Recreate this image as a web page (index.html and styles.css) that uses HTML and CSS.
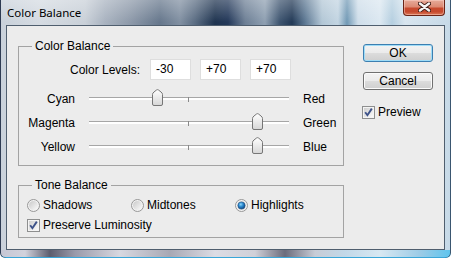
FILE: index.html
```html
<!DOCTYPE html>
<html>
<head>
<meta charset="utf-8">
<title>Color Balance</title>
<link rel="stylesheet" href="styles.css">
</head>
<body>
<div class="window">
  <div class="titlebar">
    <span class="title">Color Balance</span>
    <div class="close">
      <svg width="13" height="10" viewBox="0 0 13 10">
        <path d="M2 1.5 L11 8.5 M11 1.5 L2 8.5" stroke="#3e1a14" stroke-width="4.2" stroke-linecap="round" fill="none"/>
        <path d="M2 1.5 L11 8.5 M11 1.5 L2 8.5" stroke="#f4f4f4" stroke-width="2.4" stroke-linecap="round" fill="none"/>
      </svg>
    </div>
  </div>
  <div class="client">
    <div class="main">
      <fieldset class="group cb">
        <legend>Color Balance</legend>
        <div class="levels">
          <span class="levels-label">Color Levels:</span>
          <div class="field">-30</div>
          <div class="field">+70</div>
          <div class="field">+70</div>
        </div>
        <div class="sliders">
          <span class="lbl-l">Cyan</span>
          <div class="track"><span class="tick"></span>
            <svg class="thumb" style="left:calc(35% - 7px)" width="11" height="17" viewBox="0 0 11 17"><defs><linearGradient id="tg1" x1="0" y1="0" x2="0" y2="1"><stop offset="0" stop-color="#ffffff"/><stop offset="1" stop-color="#d6d6d6"/></linearGradient></defs><path d="M0.5 5.5 Q0.5 4 2 3 L4.5 1 Q5.5 0.3 6.5 1 L9 3 Q10.5 4 10.5 5.5 V15 Q10.5 16.5 9 16.5 H2 Q0.5 16.5 0.5 15 Z" fill="url(#tg1)" stroke="#767676"/></svg>
          </div>
          <span class="lbl-r">Red</span>

          <span class="lbl-l">Magenta</span>
          <div class="track"><span class="tick"></span>
            <svg class="thumb" style="left:calc(85% - 7px)" width="11" height="17" viewBox="0 0 11 17"><defs><linearGradient id="tg2" x1="0" y1="0" x2="0" y2="1"><stop offset="0" stop-color="#ffffff"/><stop offset="1" stop-color="#d6d6d6"/></linearGradient></defs><path d="M0.5 5.5 Q0.5 4 2 3 L4.5 1 Q5.5 0.3 6.5 1 L9 3 Q10.5 4 10.5 5.5 V15 Q10.5 16.5 9 16.5 H2 Q0.5 16.5 0.5 15 Z" fill="url(#tg2)" stroke="#767676"/></svg>
          </div>
          <span class="lbl-r">Green</span>

          <span class="lbl-l">Yellow</span>
          <div class="track"><span class="tick"></span>
            <svg class="thumb" style="left:calc(85% - 7px)" width="11" height="17" viewBox="0 0 11 17"><defs><linearGradient id="tg3" x1="0" y1="0" x2="0" y2="1"><stop offset="0" stop-color="#ffffff"/><stop offset="1" stop-color="#d6d6d6"/></linearGradient></defs><path d="M0.5 5.5 Q0.5 4 2 3 L4.5 1 Q5.5 0.3 6.5 1 L9 3 Q10.5 4 10.5 5.5 V15 Q10.5 16.5 9 16.5 H2 Q0.5 16.5 0.5 15 Z" fill="url(#tg3)" stroke="#767676"/></svg>
          </div>
          <span class="lbl-r">Blue</span>
        </div>
      </fieldset>

      <fieldset class="group tb">
        <legend>Tone Balance</legend>
        <div class="radios">
          <div class="opt">
            <svg width="13" height="13" viewBox="0 0 13 13"><defs><linearGradient id="rg1" x1="0" y1="0" x2="1" y2="1"><stop offset="0" stop-color="#c9c9c9"/><stop offset="1" stop-color="#fbfbfb"/></linearGradient></defs><circle cx="6.5" cy="6.5" r="6" fill="#f2f2f2" stroke="#979797"/><circle cx="6.5" cy="6.5" r="4.5" fill="url(#rg1)"/></svg>
            <span>Shadows</span>
          </div>
          <div class="opt">
            <svg width="13" height="13" viewBox="0 0 13 13"><defs><linearGradient id="rg2" x1="0" y1="0" x2="1" y2="1"><stop offset="0" stop-color="#c9c9c9"/><stop offset="1" stop-color="#fbfbfb"/></linearGradient></defs><circle cx="6.5" cy="6.5" r="6" fill="#f2f2f2" stroke="#979797"/><circle cx="6.5" cy="6.5" r="4.5" fill="url(#rg2)"/></svg>
            <span>Midtones</span>
          </div>
          <div class="opt">
            <svg width="13" height="13" viewBox="0 0 13 13"><defs><radialGradient id="rg3" cx="0.4" cy="0.35" r="0.7"><stop offset="0" stop-color="#8fd6fa"/><stop offset="0.45" stop-color="#2a8ad0"/><stop offset="1" stop-color="#0d3f78"/></radialGradient></defs><circle cx="6.5" cy="6.5" r="6" fill="#f2f2f2" stroke="#979797"/><circle cx="6.5" cy="6.5" r="4.5" fill="#dcdcdc"/><circle cx="6.5" cy="6.5" r="3.6" fill="url(#rg3)" stroke="#1b4f86" stroke-width="0.6"/></svg>
            <span>Highlights</span>
          </div>
        </div>
        <div class="check">
          <svg width="13" height="13" viewBox="0 0 13 13"><defs><linearGradient id="cg1" x1="0" y1="0" x2="1" y2="1"><stop offset="0" stop-color="#cfcfcf"/><stop offset="1" stop-color="#fafafa"/></linearGradient></defs><rect x="0.5" y="0.5" width="12" height="12" fill="#f4f4f4" stroke="#8e8f8f"/><rect x="2" y="2" width="9" height="9" fill="url(#cg1)"/><path d="M3.2 6.3 L5.4 9.2 L9.8 2.6" fill="none" stroke="#3d5289" stroke-width="1.9"/></svg>
          <span>Preserve Luminosity</span>
        </div>
      </fieldset>
    </div>

    <div class="side">
      <button class="btn default">OK</button>
      <button class="btn cancel">Cancel</button>
      <div class="check preview">
        <svg width="13" height="13" viewBox="0 0 13 13"><defs><linearGradient id="cg2" x1="0" y1="0" x2="1" y2="1"><stop offset="0" stop-color="#cfcfcf"/><stop offset="1" stop-color="#fafafa"/></linearGradient></defs><rect x="0.5" y="0.5" width="12" height="12" fill="#f4f4f4" stroke="#8e8f8f"/><rect x="2" y="2" width="9" height="9" fill="url(#cg2)"/><path d="M3.2 6.3 L5.4 9.2 L9.8 2.6" fill="none" stroke="#3d5289" stroke-width="1.9"/></svg>
        <span>Preview</span>
      </div>
    </div>
  </div>
</div>
</body>
</html>
```
FILE: styles.css
```css
* { box-sizing: border-box; margin: 0; padding: 0; }
html, body { width: 451px; height: 258px; overflow: hidden; }
body {
  font: 12px/14px "Liberation Sans", Arial, sans-serif;
  color: #000;
  background: #ffffff;
}

.window {
  width: 451px;
  height: 258px;
  display: flex;
  flex-direction: column;
  background:
    linear-gradient(to right, #c6c6d4 0px, #d2d2dc 25px, #5d5d6e 50px, #9a9aaa 75px, #d8d8e0 120px, #a8a8b4 170px, #dcdce4 215px, #d0d0d8 255px, #6c6c7c 285px, #c8ccd6 315px, #c2d8e8 345px, #d8e8f2 380px, #9ccbe6 420px, #5cc4ee 451px) left bottom / 100% 8px no-repeat,
    linear-gradient(to bottom, rgba(255,255,255,0.28), rgba(255,255,255,0) 22px),
    linear-gradient(to right, #c9d1da 0px, #d5dbe2 40px, #c9d0d8 85px, #a9b3c0 105px, #8e9aaa 130px, #66778c 160px, #8190a2 180px, #5b6d83 195px, #1f3450 215px, #24395a 228px, #6d7f95 245px, #8fa0b2 265px, #3d546f 280px, #233a57 292px, #5d7893 305px, #b3c7d6 322px, #c3d5e2 338px, #7199b5 347px, #cfdeea 358px, #dce8f1 380px, #b5cfe0 392px, #d8e5ef 405px, #c6d9e7 451px);
  box-shadow: inset 1px 0 0 #2e3b52, inset -1px 0 0 #3a5670, inset 0 -1px 0 #3aa6d8;
  border-radius: 0 0 5px 5px;
}

.titlebar {
  height: 25px;
  flex: none;
  display: flex;
  align-items: flex-start;
  padding-left: 7px;
}
.title {
  font: 11.5px/16px "Noto Sans", "Open Sans", sans-serif;
  margin-top: 5px;
  color: #000;
}
.close {
  margin-left: auto;
  margin-right: 6px;
  width: 42px;
  height: 16px;
  border: 1px solid #6a2417;
  border-top: none;
  border-radius: 0 0 4px 4px;
  background: linear-gradient(to bottom, #e6ab9a 0%, #dc8a74 45%, #c84a2e 55%, #c64a2f 78%, #dc7a58 100%);
  box-shadow: inset 0 0 0 1px rgba(255, 220, 210, 0.45);
  display: flex;
  align-items: center;
  justify-content: center;
}
.close svg { display: block; margin-top: -1px; }

.client {
  flex: none;
  height: 225px;
  margin: 0 6px;
  border: 1px solid #4f5e6e;
  background: #ececec;
  display: flex;
  padding-left: 11px;
}

.main { width: 326px; flex: none; }

fieldset.group {
  border: 1px solid #a3a3a3;
  min-width: 0;
  width: 326px;
}
fieldset.group legend {
  margin-left: 13px;
  padding: 0 3px;
  line-height: 14px;
}

.cb { margin-top: 13px; padding: 0 0 6px 0; }

.levels {
  margin-top: 6px;
  height: 21px;
  display: flex;
  justify-content: flex-end;
  align-items: center;
  gap: 9px;
  padding-right: 52px;
}
.levels-label { margin-right: 1px; }
.field {
  width: 41px;
  height: 21px;
  background: #ffffff;
  border: 1px solid #dedede;
  padding-left: 5px;
  line-height: 19px;
}

.sliders {
  margin-top: 7px;
  display: grid;
  grid-template-columns: 56px 200px 1fr;
  grid-auto-rows: 24px;
  column-gap: 14px;
  line-height: 24px;
}
.lbl-l { text-align: right; }
.lbl-r { padding-left: 0; }
.track { position: relative; }
.track::before {
  content: "";
  position: absolute;
  left: 0;
  right: 0;
  top: 10px;
  height: 2px;
  border-top: 1px solid #a6a6a6;
  background: #ffffff;
}
.tick {
  position: absolute;
  left: 99px;
  top: 10px;
  width: 1px;
  height: 5px;
  background: #8a8a8a;
}
.thumb {
  position: absolute;
  top: 2px;
  display: block;
}

.tb { margin-top: 12px; padding: 3px 0 2px 0; }
.radios {
  display: grid;
  grid-template-columns: repeat(3, 104px);
  padding-left: 8px;
  height: 20px;
}
.opt, .check {
  display: flex;
  align-items: center;
  gap: 3px;
  height: 20px;
}
.opt svg, .check svg { display: block; flex: none; }
.tb .check { padding-left: 8px; }

.side {
  margin-left: 19px;
  padding-top: 18px;
  display: flex;
  flex-direction: column;
  align-items: flex-start;
}
.btn {
  width: 70px;
  height: 18px;
  font: 12px/16px "Liberation Sans", Arial, sans-serif;
  color: #000;
  border-radius: 3px;
  background: linear-gradient(to bottom, #f3f3f3 0%, #ebebeb 48%, #dcdcdc 52%, #cfcfcf 100%);
  border: 1px solid #707070;
  box-shadow: inset 0 0 0 1px #fbfbfb;
}
.btn.default {
  border-color: #3c7fb1;
  box-shadow: inset 0 0 0 1px #9fdcf7;
}
.btn.cancel { margin-top: 10px; }
.preview { margin-top: 12px; margin-left: -1px; }
```
